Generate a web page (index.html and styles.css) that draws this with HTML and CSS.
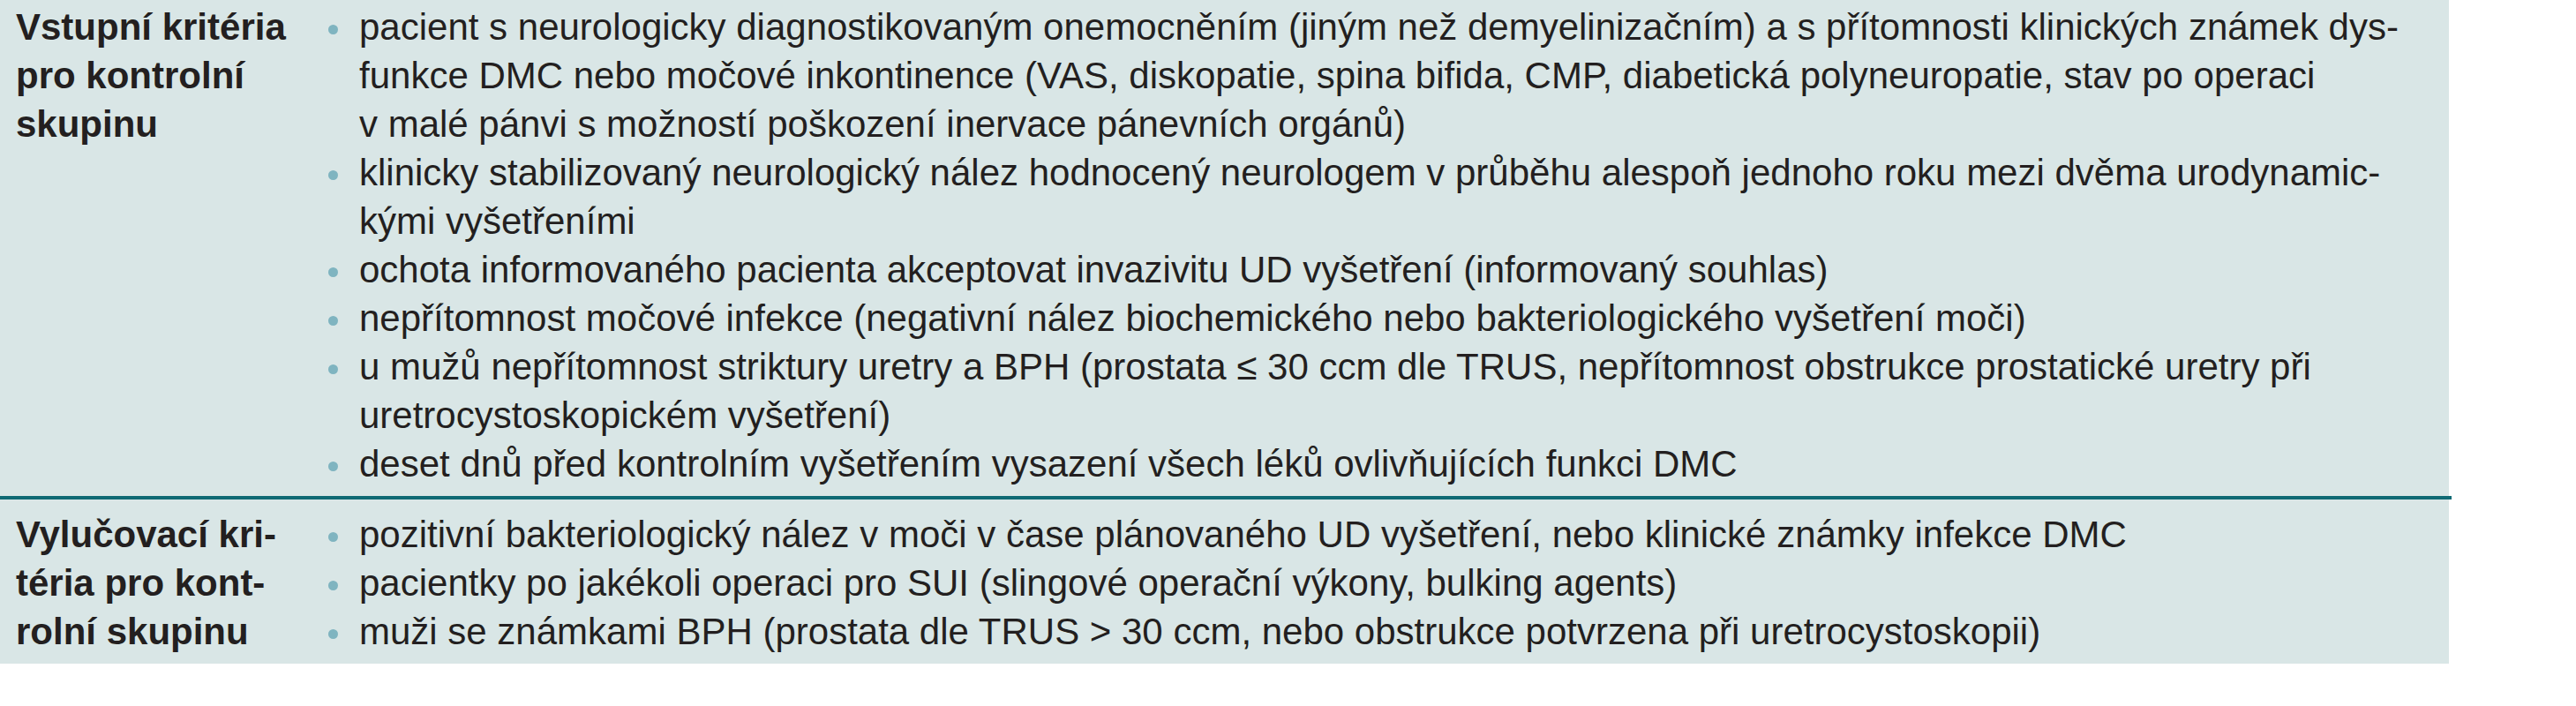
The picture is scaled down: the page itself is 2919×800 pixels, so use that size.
FILE: index.html
```html
<!DOCTYPE html>
<html lang="cs">
<head>
<meta charset="utf-8">
<title>Kritéria pro kontrolní skupinu</title>
<link rel="stylesheet" href="styles.css">
</head>
<body>
<div class="panel">
  <div class="row row-first">
    <div class="label">Vstupní kritéria<br>pro kontrolní<br>skupinu</div>
    <ul class="items">
      <li>pacient s neurologicky diagnostikovaným onemocněním (jiným než demyelinizačním) a s přítomnosti klinických známek dys-<br>funkce DMC nebo močové inkontinence (VAS, diskopatie, spina bifida, CMP, diabetická polyneuropatie, stav po operaci<br>v malé pánvi s možností poškození inervace pánevních orgánů)</li>
      <li>klinicky stabilizovaný neurologický nález hodnocený neurologem v průběhu alespoň jednoho roku mezi dvěma urodynamic-<br>kými vyšetřeními</li>
      <li>ochota informovaného pacienta akceptovat invazivitu UD vyšetření (informovaný souhlas)</li>
      <li>nepřítomnost močové infekce (negativní nález biochemického nebo bakteriologického vyšetření moči)</li>
      <li>u mužů nepřítomnost striktury uretry a BPH (prostata ≤ 30 ccm dle TRUS, nepřítomnost obstrukce prostatické uretry při<br>uretrocystoskopickém vyšetření)</li>
      <li>deset dnů před kontrolním vyšetřením vysazení všech léků ovlivňujících funkci DMC</li>
    </ul>
  </div>
  <div class="row row-second">
    <div class="label">Vylučovací kri-<br>téria pro kont-<br>rolní skupinu</div>
    <ul class="items">
      <li>pozitivní bakteriologický nález v moči v čase plánovaného UD vyšetření, nebo klinické známky infekce DMC</li>
      <li>pacientky po jakékoli operaci pro SUI (slingové operační výkony, bulking agents)</li>
      <li>muži se známkami BPH (prostata dle TRUS &gt; 30 ccm, nebo obstrukce potvrzena při uretrocystoskopii)</li>
    </ul>
  </div>
</div>
</body>
</html>
```

FILE: styles.css
```css
html, body {
  margin: 0;
  padding: 0;
  background: #ffffff;
}

body {
  font-family: "Liberation Sans", Arial, sans-serif;
  font-size: 42px;
  line-height: 55px;
  color: #231f20;
}

.panel {
  width: 2775px;
  background: #d9e6e6;
}

.row {
  display: grid;
  grid-template-columns: 372px 1fr;
}

.row-first {
  padding: 3px 0 9px;
  border-bottom: 4px solid #0f6a74;
  margin-right: -3px;
}

.row-second {
  padding: 12px 0 9px;
}

.label {
  padding-left: 18px;
  font-weight: 700;
  white-space: nowrap;
}

.items {
  list-style: none;
  margin: 0;
  padding: 0;
  white-space: nowrap;
}

.items li {
  position: relative;
  padding-left: 35px;
}

.items li::before {
  content: "";
  position: absolute;
  left: 0;
  top: 25px;
  width: 11px;
  height: 11px;
  border-radius: 50%;
  background: #7fb4c0;
}
```
